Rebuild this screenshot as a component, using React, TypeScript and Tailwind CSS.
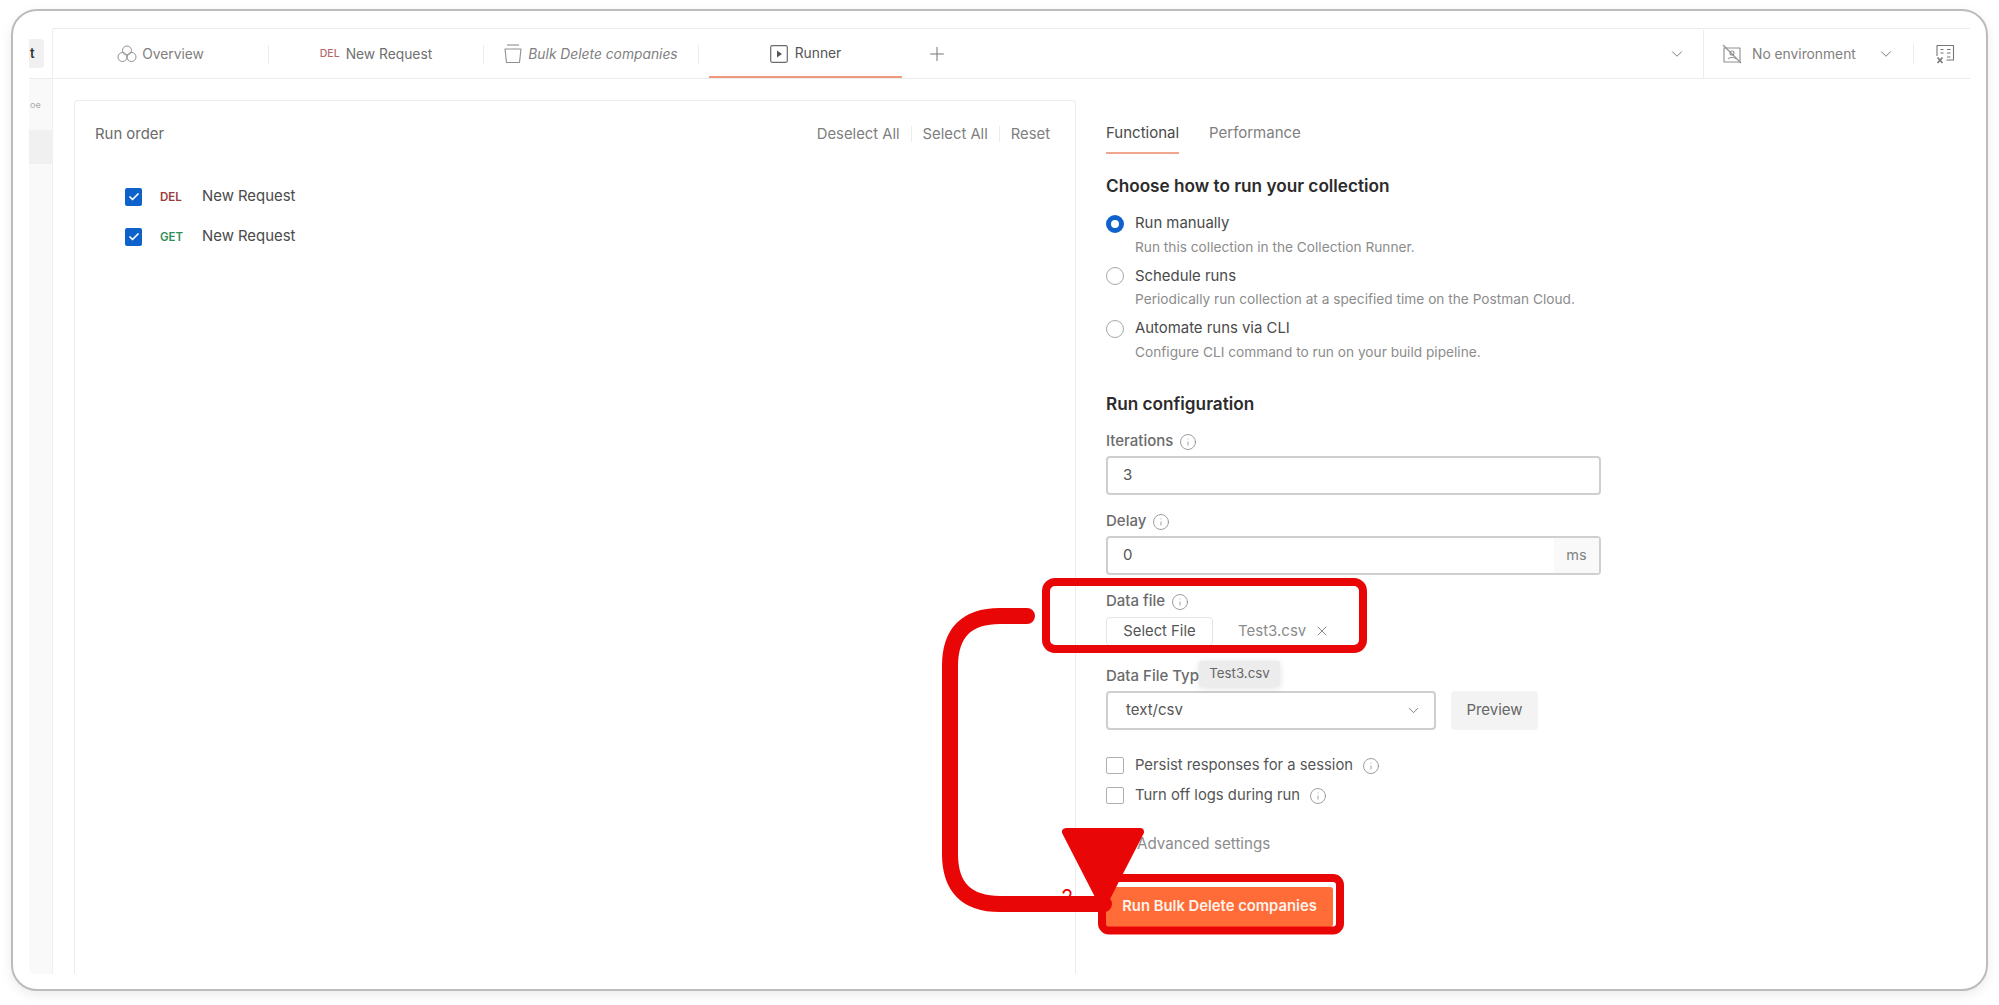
import React from 'react';
import { ChevronDown, Info, Plus, X, Check } from 'lucide-react';

const font = { fontFamily: 'Inter, "Noto Sans", sans-serif' };

// Small round info glyph next to labels
const InfoIcon = ({ className = '' }: { className?: string }) => (
  <Info className={`w-[18px] h-[18px] text-[#8a8a8a] ${className}`} strokeWidth={1.1} />
);

const OverviewIcon = () => (
  <svg width="20" height="18" viewBox="0 0 20 18" fill="none" stroke="#8f8f8f" strokeWidth="1">
    <circle cx="10" cy="5.5" r="4.5" />
    <circle cx="5.5" cy="12" r="4.5" />
    <circle cx="14.5" cy="12" r="4.5" />
  </svg>
);

const CollectionIcon = () => (
  <svg width="18" height="20" viewBox="0 0 18 20" fill="none" stroke="#8f8f8f" strokeWidth="1.1">
    <path d="M3 1h12" />
    <path d="M1 5h16l-1.5 13.5h-13z" strokeLinejoin="round" />
  </svg>
);

const RunnerIcon = () => (
  <svg width="18" height="18" viewBox="0 0 18 18" fill="none">
    <rect x="0.7" y="0.7" width="16.6" height="16.6" rx="1.5" stroke="#6b6b6b" strokeWidth="1.2" />
    <path d="M7 5.5l5 3.5-5 3.5z" fill="#555" />
  </svg>
);

const NoEnvIcon = () => (
  <svg width="20" height="20" viewBox="0 0 20 20" fill="none" stroke="#8f8f8f" strokeWidth="1.1">
    <path d="M2 4h16v14H2z" strokeLinejoin="round" />
    <path d="M1 1l18 18" />
    <circle cx="10" cy="9" r="2" />
    <path d="M6 15c1-2 7-2 8 0" />
  </svg>
);

const VarsIcon = () => (
  <svg width="20" height="20" viewBox="0 0 20 20" fill="none" stroke="#777" strokeWidth="1.1">
    <path d="M2 12V1.500h16.500V16h-7" strokeLinejoin="round" />
    <path d="M5.500 5.500h3M12 5.500h3.500M5.500 9h3M12 9h3.500M12 13h3.500" />
    <path d="M2.500 13.500l5 5.500M7.500 13.500l-5 5.500" strokeWidth="1.6" />
  </svg>
);

const Divider = ({ className = 'h-[19px]' }: { className?: string }) => (
  <div className={`w-px bg-[#ececec] ${className}`} />
);

const RunItem = ({ method, color }: { method: string; color: string }) => (
  <div className="flex items-center h-[40px]">
    <span className="w-[17px] h-[18px] rounded-[2px] bg-[#0f62c9] flex items-center justify-center">
      <Check className="w-[12px] h-[12px] text-white" strokeWidth={3.5} />
    </span>
    <span className={`ml-[18px] w-[42px] text-[11.5px] font-semibold pt-[1px] ${color}`}>{method}</span>
    <span className="text-[14.9px] text-[#4a4a4a] -mt-[2px]">New Request</span>
  </div>
);

const RadioRow = ({ title, desc, on }: { title: string; desc: string; on?: boolean }) => (
  <div className="h-[52.5px]">
    <div className="flex items-center h-[23px]">
      {on ? (
        <span className="w-[18px] h-[18px] rounded-full border-[5px] border-[#0f62c9] bg-white" />
      ) : (
        <span className="w-[18px] h-[18px] rounded-full border border-[#a8a8a8] bg-white" />
      )}
      <span className="ml-[11px] text-[14.9px] text-[#4a4a4a]">{title}</span>
    </div>
    <div className="ml-[29px] mt-[1px] h-[22px] flex items-center text-[13.7px] text-[#8c8c8c]">{desc}</div>
  </div>
);

const FieldLabel = ({ text }: { text: string }) => (
  <div className="flex items-center gap-[6px] h-[20px] text-[15px] font-medium text-[#6b6b6b]">
    {text}
    <InfoIcon />
  </div>
);

const CheckRow = ({ text }: { text: string }) => (
  <div className="flex items-center h-[30px]">
    <span className="w-[18px] h-[17px] rounded-[2px] border border-[#b0b0b0] bg-white" />
    <span className="ml-[11px] text-[14.8px] text-[#555]">{text}</span>
    <InfoIcon className="ml-[9px]" />
  </div>
);

export default function App() {
  return (
    <div className="relative w-[1999px] h-[1005px] bg-white overflow-hidden" style={font}>
      {/* window frame */}
      <div className="ml-[11px] mt-[9px] w-[1977px] h-[982px] rounded-[26px] border-2 border-[#bcbcbc] shadow-[0_4px_12px_rgba(0,0,0,0.08)] bg-white pl-[16px] pr-[16px] pt-[17px] pb-[15px]">
        <div className="flex h-full">
          {/* collapsed sidebar sliver */}
          <aside className="w-[24px] shrink-0 bg-[#f9f9f9] border-r border-[#efefef] rounded-tl-[6px] rounded-bl-[6px] flex flex-col">
            <div className="h-[51px] border-b border-[#ececec] bg-white pt-[11px] shrink-0">
              <div className="w-[15px] h-[29px] bg-[#f0f0f0] rounded-r-[4px] flex items-center pl-[1px] text-[13px] font-semibold text-[#333]">
                t
              </div>
            </div>
            <div className="h-[51px] flex items-center pt-[1px] pl-[1px] text-[9px] text-[#aaa] shrink-0 overflow-hidden">oe</div>
            <div className="h-[34px] bg-[#f0f0f0] shrink-0" />
          </aside>

          <main className="flex-1 min-w-0 flex flex-col">
            {/* tab strip */}
            <div className="h-[51px] shrink-0 flex items-center border-t border-b border-[#ececec] pt-[1px] relative">
              <div className="w-[215px] flex items-center justify-center gap-[5px] text-[13.8px] text-[#808080]">
                <OverviewIcon />
                Overview
              </div>
              <Divider />
              <div className="w-[214px] flex items-center justify-center gap-[6px] text-[13.8px] text-[#6f6f6f]">
                <span className="text-[10.5px] font-medium text-[#b56a6a]">DEL</span>
                New Request
              </div>
              <Divider />
              <div className="w-[214px] flex items-center justify-center gap-[6px] text-[13.8px] italic text-[#808080]">
                <CollectionIcon />
                Bulk Delete companies
              </div>
              <Divider />
              <div className="ml-[10px] w-[193px] h-full pt-[1px] flex items-center justify-center gap-[7px] text-[13.8px] text-[#555] border-b-2 border-[#f0987c]">
                <RunnerIcon />
                Runner
              </div>
              <Plus className="ml-[24px] w-[22px] h-[22px] text-[#777]" strokeWidth={1.1} />
              <div className="flex-1" />
              <ChevronDown className="w-[18px] h-[18px] text-[#777]" strokeWidth={1.3} />
              <div className="ml-[17px] w-px h-full bg-[#ececec]" />
              <div className="ml-[18px] flex items-center">
                <NoEnvIcon />
                <span className="ml-[10px] w-[125px] text-[13.8px] text-[#808080] whitespace-nowrap">No environment</span>
                <ChevronDown className="w-[18px] h-[18px] text-[#777]" strokeWidth={1.3} />
                <Divider className="ml-[18px] h-[20px]" />
                <span className="ml-[21px] mr-[15px]">
                  <VarsIcon />
                </span>
              </div>
            </div>

            {/* runner body */}
            <div className="flex-1 min-h-0 flex pl-[21px] pt-[21px]">
              <section className="w-[1002px] shrink-0 border-t border-l border-r border-[#ececec] rounded-t-[4px] px-[20px]">
                <div className="h-[66px] flex items-center justify-between pr-[5px]">
                  <span className="text-[14.9px] text-[#6b6b6b]">Run order</span>
                  <div className="flex items-center text-[14.8px] text-[#808080] gap-[11px]">
                    <span>Deselect All</span>
                    <Divider className="h-[16px]" />
                    <span>Select All</span>
                    <Divider className="h-[16px]" />
                    <span>Reset</span>
                  </div>
                </div>
                <div className="pl-[30px] pt-[10px]">
                  <RunItem method="DEL" color="text-[#9c3b3b]" />
                  <RunItem method="GET" color="text-[#2f8f57]" />
                </div>
              </section>

              <section className="pl-[30px] w-[527px] shrink-0 pt-[1px]">
                <div className="flex gap-[30px] text-[15px] h-[53px]">
                  <div className="h-full pt-[21px] text-[#4a4a4a] border-b-2 border-[#f0a58c] w-[73px] whitespace-nowrap">Functional</div>
                  <div className="h-full pt-[21px] text-[#808080]">Performance</div>
                </div>
                <h2 className="mt-[21px] h-[22px] flex items-center text-[17.2px] font-semibold text-[#2b2b2b]">Choose how to run your collection</h2>
                <div className="mt-[15px]">
                  <RadioRow on title="Run manually" desc="Run this collection in the Collection Runner." />
                  <RadioRow title="Schedule runs" desc="Periodically run collection at a specified time on the Postman Cloud." />
                  <RadioRow title="Automate runs via CLI" desc="Configure CLI command to run on your build pipeline." />
                </div>
                <h2 className="mt-[23px] h-[22px] flex items-center text-[17.2px] font-semibold text-[#2b2b2b]">Run configuration</h2>
                <div className="mt-[17px]">
                  <FieldLabel text="Iterations" />
                </div>
                <div className="mt-[4px] w-[495px] h-[39px] rounded-[4px] border-2 border-[#cfcfcf] flex items-center pl-[15px] text-[15px] text-[#555]">3</div>
                <div className="mt-[17px]">
                  <FieldLabel text="Delay" />
                </div>
                <div className="mt-[4px] w-[495px] h-[39px] rounded-[4px] border-2 border-[#cfcfcf] flex items-center pl-[15px] text-[15px] text-[#555]">
                  <span className="flex-1">0</span>
                  <span className="w-[45px] h-full bg-[#f9f9f9] flex items-center justify-center text-[14.5px] text-[#808080]">ms</span>
                </div>
                <div className="mt-[17px]">
                  <FieldLabel text="Data file" />
                </div>
                <div className="mt-[5px] flex items-center h-[29px]">
                  <div className="w-[107px] h-full rounded-[4px] border border-[#e4e4e4] flex items-center justify-center text-[14.8px] text-[#555]">Select File</div>
                  <span className="ml-[25px] text-[15px] text-[#8c8c8c]">Test3.csv</span>
                  <X className="ml-[8px] w-[16px] h-[16px] text-[#777]" strokeWidth={1.3} />
                </div>
                <div className="relative mt-[21px]">
                  <div className="whitespace-nowrap h-[20px] flex items-center text-[15px] font-medium text-[#6b6b6b]">Data File Type</div>
                  <div className="absolute left-[93px] top-[-6px] w-[81px] h-[26px] rounded-[3px] bg-[#ececec] shadow-[0_1px_6px_rgba(0,0,0,0.12)] flex items-center justify-center text-[13.3px] text-[#666]">
                    Test3.csv
                  </div>
                </div>
                <div className="mt-[4px] flex items-center">
                  <div className="w-[330px] h-[39px] rounded-[4px] border-2 border-[#cfcfcf] flex items-center justify-between pl-[18px] pr-[12px] text-[15px] text-[#555]">
                    text/csv
                    <ChevronDown className="w-[17px] h-[17px] text-[#777]" strokeWidth={1.3} />
                  </div>
                  <div className="ml-[15px] w-[87px] h-[39px] rounded-[4px] bg-[#f3f3f3] flex items-center justify-center text-[15px] text-[#666]">Preview</div>
                </div>
                <div className="mt-[21px]">
                  <CheckRow text="Persist responses for a session" />
                  <CheckRow text="Turn off logs during run" />
                </div>
                <div className="mt-[24px] pl-[31px] h-[20px] flex items-center text-[15.2px] text-[#8c8c8c]">Advanced settings</div>
                <div className="mt-[32px] w-[227px] h-[40px] rounded-[3px] bg-[#ff6c37] flex items-center justify-center text-[14.8px] font-semibold text-[#fff3ec]">
                  Run Bulk Delete companies
                </div>
              </section>
            </div>
          </main>
        </div>
      </div>

      {/* tutorial annotation drawn over the screenshot */}
      <span className="absolute left-[1061px] top-[882px] text-[20px] text-[#e90606]">2</span>
      <svg className="absolute inset-0 pointer-events-none" width="1999" height="1005" viewBox="0 0 1999 1005" fill="none">
        <rect x="1046" y="582" width="317" height="67" rx="9" stroke="#e90606" strokeWidth="8" />
        <rect x="1102" y="878" width="238" height="52.500" rx="7" stroke="#e90606" strokeWidth="8" />
        <path d="M1027 616H1000Q950 616 950 666V854Q950 904 1000 904H1104" stroke="#e90606" strokeWidth="16" strokeLinecap="round" />
        <path d="M1066 832H1140L1103 904Z" fill="#e90606" stroke="#e90606" strokeWidth="8" strokeLinejoin="round" />
      </svg>
    </div>
  );
}
